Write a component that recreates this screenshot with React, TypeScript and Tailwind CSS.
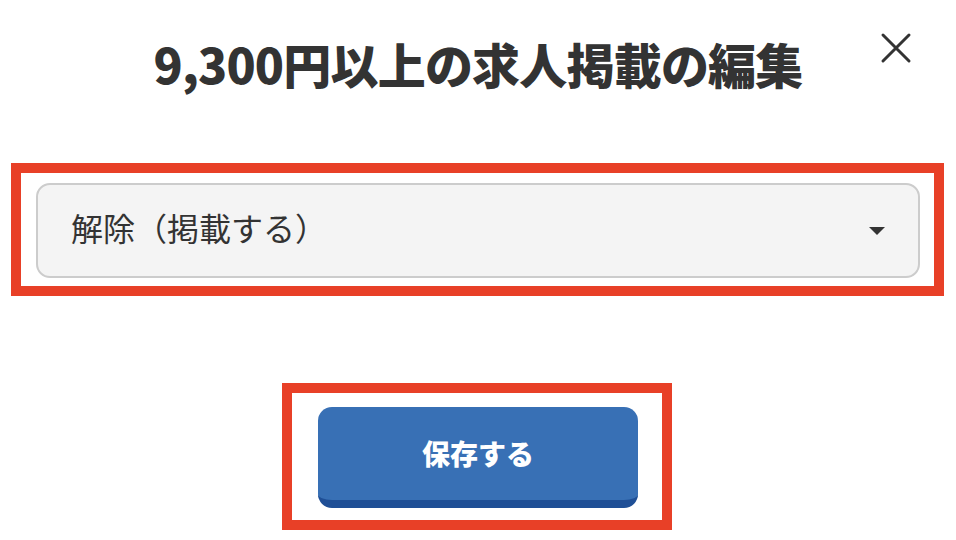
import React from "react";

export default function App() {
  return (
    <div
      className="relative w-[956px] h-[540px] bg-white overflow-hidden"
      style={{ fontFamily: '"Noto Sans CJK JP", "Noto Sans", sans-serif' }}
    >
      <div className="relative h-[163px] pt-[33px]">
        <h1 className="text-center text-[48px] leading-[60px] font-black text-[#333333] tracking-[-0.8px]">
          9,300円以上の求人掲載の編集
        </h1>
        <button className="absolute left-[880px] top-[32px] w-[32px] h-[32px] flex items-center justify-center text-[#333333]">
          <svg width="32" height="32" viewBox="0 0 32 32" fill="none">
            <path d="M3 3 L29 29 M29 3 L3 29" stroke="#333333" strokeWidth="3" strokeLinecap="round" />
          </svg>
        </button>
      </div>

      <div className="ml-[11px] w-[933px] h-[133px] border-[10px] border-[#e84027] pl-[15px] pr-[14px] pt-[10px]">
        <div className="h-[95px] rounded-[14px] border-2 border-[#cccccc] bg-[#f4f4f4] flex items-center justify-between pl-[33px] pr-[33px]">
          <span className="text-[32px] text-[#333333] leading-none pb-[8px]">解除（掲載する）</span>
          <svg width="16" height="8" viewBox="0 0 16 8">
            <path d="M0 0 L16 0 L8 8 Z" fill="#333333" />
          </svg>
        </div>
      </div>

      <div className="mt-[87px] ml-[282px] w-[390px] h-[147px] border-[10px] border-[#e84027] pl-[26px] pr-[24px] pt-[14px]">
        <button className="w-[320px] h-[101px] rounded-[14px] bg-[#3870b5] border-b-[8px] border-[#1f4f96] flex items-center justify-center text-white font-black text-[28px] leading-none pb-[2px]">
          保存する
        </button>
      </div>
    </div>
  );
}
